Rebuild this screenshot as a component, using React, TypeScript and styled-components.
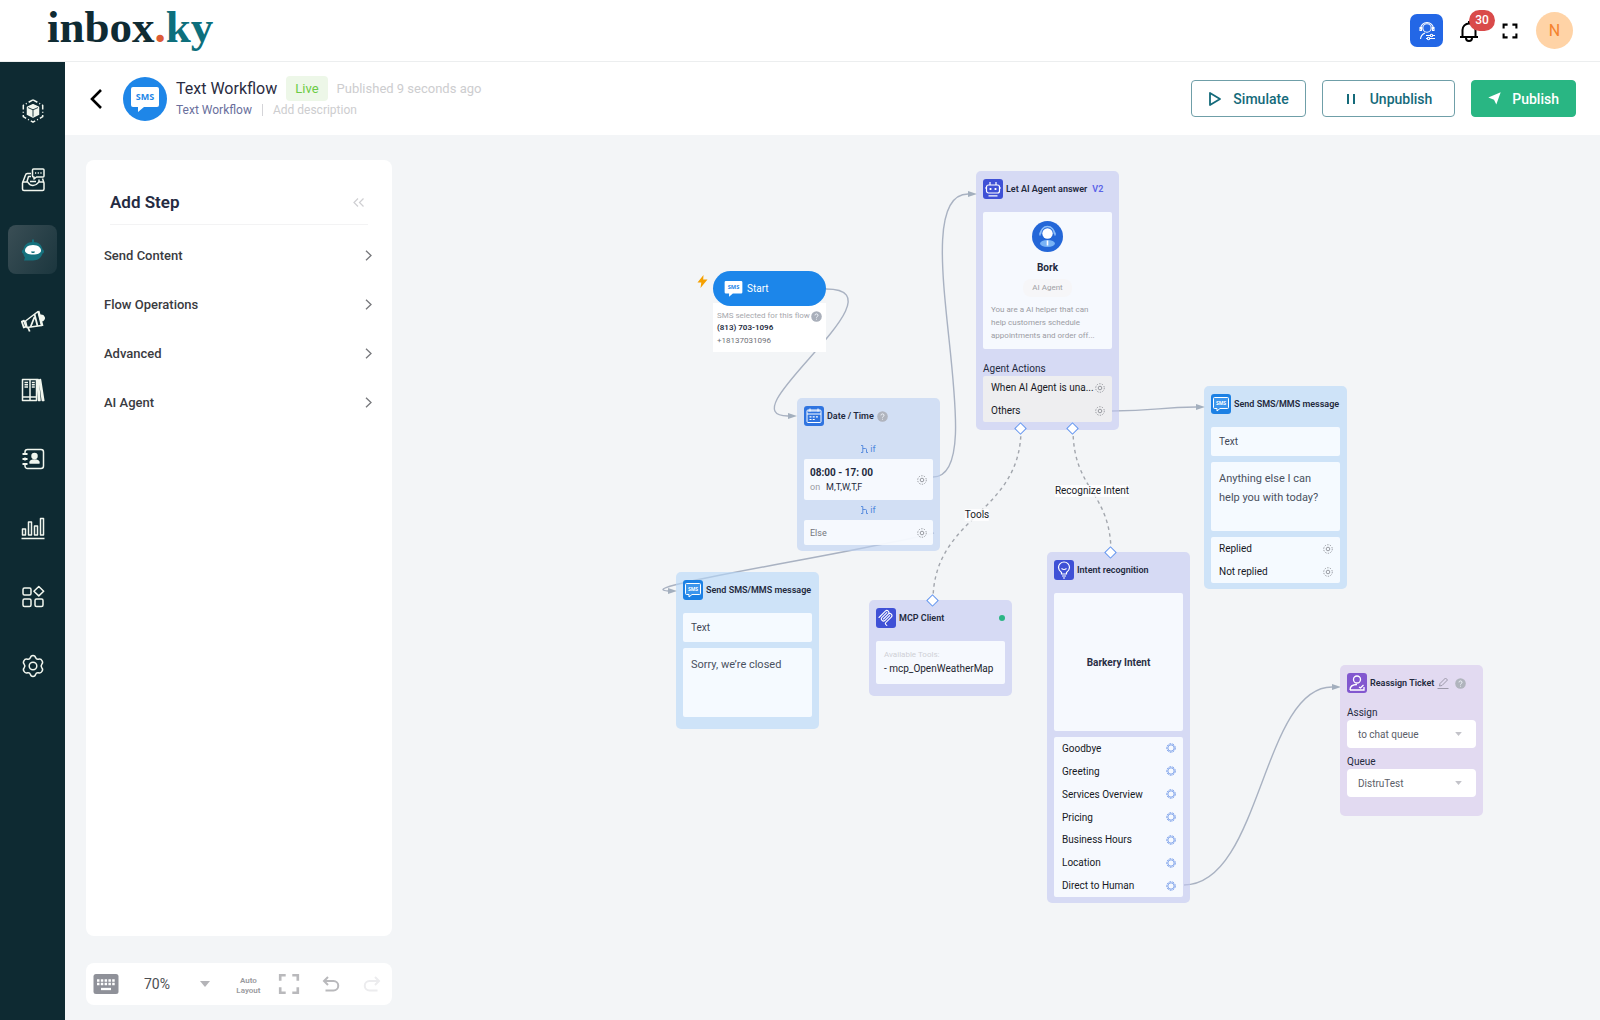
import React from "react";
import styled, { createGlobalStyle } from "styled-components";

const GlobalStyle = createGlobalStyle`
  * { box-sizing: border-box; }
  body {
    margin: 0;
    background: #f3f5f7;
    font-family: Roboto, "Liberation Sans", sans-serif;
    color: #23293d;
  }
  button, select { font-family: inherit; color: inherit; }
  svg { display: block; flex: none; }
`;

/* ---------- shell ---------- */

const Page = styled.div`
  min-height: 100vh;
  display: flex;
  flex-direction: column;
`;

const TopBar = styled.header`
  height: 62px;
  display: flex;
  align-items: center;
  justify-content: space-between;
  padding: 0 27px 0 47px;
  background: #fff;
  border-bottom: 1px solid #eceeef;
`;

const Logo = styled.a`
  font: bold 45px/52px "Liberation Serif", serif;
  color: #0f2b33;
  text-decoration: none;
  padding-bottom: 8px;
`;
const LogoDot = styled.span`color: #dd5b36;`;
const LogoEnd = styled.span`color: #0d6f7c;`;

const TopActions = styled.div`
  display: flex;
  align-items: center;
`;

const PlainButton = styled.button`
  display: flex;
  align-items: center;
  justify-content: center;
  padding: 0;
  border: 0;
  background: none;
  cursor: pointer;
`;

const AgentButton = styled(PlainButton)`
  width: 33px;
  height: 33px;
  border-radius: 7px;
  background: #2367e6;
  margin-right: 14px;
`;

const BellButton = styled(PlainButton)`
  position: relative;
  width: 24px;
  height: 24px;
  color: #000;
  margin-right: 20px;
`;

const Count = styled.span`
  position: absolute;
  left: 12px;
  top: -9px;
  width: 26px;
  height: 21px;
  border-radius: 11px;
  background: #d94a4a;
  color: #fff;
  font-size: 12px;
  font-weight: 500;
  line-height: 21px;
`;

const FullButton = styled(PlainButton)`
  width: 18px;
  height: 24px;
  color: #000;
  margin-right: 17px;
`;

const Avatar = styled(PlainButton)`
  width: 37px;
  height: 37px;
  border-radius: 50%;
  background: #ffd3a6;
  color: #f5822d;
  font-size: 16px;
`;

const Body = styled.div`
  flex: 1;
  display: flex;
`;

const Rail = styled.nav`
  width: 65px;
  background: #0e2a32;
  display: flex;
  flex-direction: column;
  align-items: center;
  padding-top: 24px;
  gap: 20px;
`;

const RailLink = styled.a<{ $active?: boolean }>`
  width: 49px;
  height: 49px;
  margin: ${(p) => (p.$active ? "1px 0 2px" : "0")};
  border-radius: 8px;
  display: flex;
  align-items: center;
  justify-content: center;
  color: #f1f6ee;
  background: ${(p) => (p.$active ? "linear-gradient(120deg, #3a4e55, #1b363e)" : "none")};
`;

const Main = styled.main`
  flex: 1;
  min-width: 0;
  display: flex;
  flex-direction: column;
`;

/* ---------- workflow bar ---------- */

const FlowBar = styled.div`
  height: 73px;
  display: flex;
  align-items: center;
  padding: 0 24px 0 22px;
  background: #fff;
`;

const BackButton = styled(PlainButton)`
  width: 18px;
  height: 24px;
  color: #000;
  margin-right: 18px;
`;

const FlowMark = styled.div`
  width: 44px;
  height: 44px;
  border-radius: 50%;
  background: #1e86e8;
  display: flex;
  align-items: center;
  justify-content: center;
  margin-right: 9px;
`;

const FlowInfo = styled.div`
  flex: 1;
  padding-bottom: 2px;
`;

const FlowLine = styled.div`
  display: flex;
  align-items: center;
`;

const FlowTitle = styled.h1`
  margin: 0;
  font-size: 16px;
  line-height: 25px;
  font-weight: 400;
  color: #2a2c41;
`;

const LiveTag = styled.span`
  margin: 0 9px;
  padding: 0 9px;
  border-radius: 4px;
  background: #edf7e8;
  color: #6bcb45;
  font-size: 13px;
  line-height: 25px;
`;

const Faint = styled.span`
  font-size: 13px;
  color: #cdcdcf;
`;

const Crumb = styled.span<{ $faint?: boolean }>`
  font-size: 12px;
  line-height: 18px;
  color: ${(p) => (p.$faint ? "#cdcdcf" : "#6a6f9c")};
`;

const CrumbBar = styled.span`
  width: 1px;
  height: 12px;
  margin: 0 10px;
  background: #d4d4d8;
`;

const FlowButton = styled.button<{ $solid?: boolean; $wide?: boolean }>`
  height: 37px;
  display: flex;
  align-items: center;
  gap: 11px;
  margin-left: 16px;
  padding: 0 ${(p) => (p.$wide ? 22 : 16)}px;
  border: 1px solid ${(p) => (p.$solid ? "#29b683" : "#6f9fa8")};
  border-radius: 4px;
  background: ${(p) => (p.$solid ? "#29b683" : "#fff")};
  color: ${(p) => (p.$solid ? "#fff" : "#146a7a")};
  font-size: 14px;
  font-weight: 500;
  cursor: pointer;
`;

/* ---------- left column ---------- */

const Workspace = styled.div`
  flex: 1;
  display: flex;
`;

const Tools = styled.div`
  width: 327px;
  display: flex;
  flex-direction: column;
  gap: 27px;
  padding: 25px 0 15px 21px;
`;

const StepPanel = styled.aside`
  flex: 1;
  border-radius: 8px;
  background: #fff;
  padding: 24px 18px;
`;

const StepHead = styled.div`
  display: flex;
  align-items: center;
  justify-content: space-between;
  margin: 0 6px 6px;
  padding: 0 4px 4px 0;
  height: 41px;
  border-bottom: 1px solid #f3f3f4;
`;

const StepTitle = styled.h2`
  margin: 0;
  font-size: 17px;
  line-height: 30px;
  font-weight: 600;
  color: #252b42;
`;

const CollapseButton = styled(PlainButton)`
  color: #cfcfd2;
`;

const StepRow = styled.button`
  width: 100%;
  height: 49px;
  display: flex;
  align-items: center;
  justify-content: space-between;
  padding: 0 2px 0 0;
  border: 0;
  background: none;
  color: #3a3b3f;
  font-size: 13px;
  font-weight: 500;
  cursor: pointer;
`;

const ZoomBar = styled.div`
  height: 42px;
  display: flex;
  align-items: center;
  padding: 0 11px 0 7px;
  border-radius: 8px;
  background: #fff;
  color: #b6b6b9;
`;

const ZoomField = styled.div`
  position: relative;
  display: flex;
  align-items: center;
  width: 68px;
  margin: 0 25px;
`;

const ZoomSelect = styled.select`
  appearance: none;
  width: 100%;
  height: 24px;
  padding: 0;
  border: 0;
  background: none;
  font-size: 14px;
  color: #4c4e52;
`;

const Caret = styled.svg<{ $right: number }>`
  position: absolute;
  right: ${(p) => p.$right}px;
  pointer-events: none;
`;

const AutoButton = styled(PlainButton)`
  width: 28px;
  margin-right: 16px;
  padding-top: 4px;
  color: #9a9a9e;
  font-size: 8px;
  font-weight: 600;
  line-height: 10px;
`;

const BarButton = styled(PlainButton)<{ $gap?: number; $faint?: boolean }>`
  margin-right: ${(p) => p.$gap ?? 0}px;
  color: ${(p) => (p.$faint ? "#ececee" : "#b9b9bc")};
`;

/* ---------- canvas ---------- */

const Canvas = styled.section`
  position: relative;
  flex: 1;
  min-width: 0;
  overflow: hidden;
`;

const Edges = styled.svg`
  position: absolute;
  inset: 0;
  width: 100%;
  height: 100%;
`;

const tones = {
  sky: "rgba(181, 215, 248, 0.6)",
  blue: "rgba(189, 209, 242, 0.6)",
  indigo: "rgba(195, 200, 241, 0.6)",
  purple: "#e2daf1",
};

const Spot = styled.div<{ $x: number; $y: number }>`
  position: absolute;
  left: ${(p) => p.$x}px;
  top: ${(p) => p.$y}px;
`;

const NodeBox = styled(Spot)<{ $tone: keyof typeof tones; $end?: number }>`
  width: 143px;
  padding: 8px 7px ${(p) => p.$end ?? 7}px;
  border-radius: 5px;
  background: ${(p) => tones[p.$tone]};
`;

const NodeHead = styled.div`
  display: flex;
  align-items: center;
  gap: 3px;
  height: 20px;
  margin-bottom: 13px;
`;

const NodeIcon = styled.span<{ $bg: string }>`
  width: 20px;
  height: 20px;
  border-radius: 3px;
  background: ${(p) => p.$bg};
`;

const NodeTitle = styled.h3`
  margin: 0;
  font-size: 9px;
  font-weight: 600;
  line-height: 12px;
  white-space: nowrap;
`;

const Version = styled.span`
  margin-left: 2px;
  font-size: 9px;
  font-weight: 600;
  color: #5a63e8;
`;

const Online = styled.span`
  width: 6px;
  height: 6px;
  border-radius: 50%;
  background: #2bb584;
  margin-left: auto;
`;

const Card = styled.div<{ $h?: number }>`
  min-height: ${(p) => p.$h ?? 0}px;
  border-radius: 2px;
  background: rgba(250, 252, 255, 0.9);
`;

const CardStack = styled.div`
  display: flex;
  flex-direction: column;
  gap: 6px;
`;

const TypeCard = styled(Card)`
  padding: 0 8px;
  font-size: 10px;
  line-height: 29px;
  color: #3f4656;
`;

const MessageCard = styled(Card)`
  padding: 7px 8px;
  font-size: 11px;
  line-height: 19px;
  color: #4a5160;
`;

const GreyCard = styled(Card)`
  background: #eeeef0;
`;

const IntentCard = styled(Card)`
  height: 160px;
  display: flex;
  flex-direction: column;
`;

const Row = styled.div`
  height: 23px;
  display: flex;
  align-items: center;
  justify-content: space-between;
  padding: 0 7px 0 8px;
  font-size: 10px;
  color: #17191f;
  white-space: nowrap;
`;

const AgentCard = styled(Card)`
  height: 137px;
  display: flex;
  flex-direction: column;
  align-items: center;
  padding: 9px 8px 0;
`;

const AgentName = styled.div`
  margin-top: 9px;
  font-size: 10px;
  font-weight: 700;
  line-height: 14px;
`;

const AgentTag = styled.div`
  margin: 4px 0 6px;
  padding: 0 9px;
  border-radius: 8px;
  background: #f6f6f8;
  color: #a0a0a4;
  font-size: 8px;
  line-height: 18px;
`;

const AgentText = styled.p`
  margin: 0;
  align-self: stretch;
  font-size: 8px;
  line-height: 13px;
  color: #9b9ca3;
  white-space: nowrap;
`;

const SectionLabel = styled.div`
  margin-top: 12px;
  font-size: 10px;
  line-height: 15px;
`;

const Branch = styled.div`
  height: 20px;
  display: flex;
  align-items: center;
  justify-content: center;
  gap: 2px;
  color: #4f86dd;
  font-size: 9px;
`;

const SlotCard = styled(Card)`
  display: flex;
  align-items: center;
  justify-content: space-between;
  padding: 0 6px;
`;

const Hours = styled.div`
  font-size: 10px;
  font-weight: 700;
  line-height: 15px;
`;

const Days = styled.div`
  font-size: 9px;
  line-height: 15px;
`;

const Muted = styled.span`
  color: #9a9ca3;
  margin-right: 6px;
`;

const Else = styled.span`
  font-size: 9px;
  color: #74767c;
`;

const CenterCard = styled(Card)`
  display: flex;
  align-items: center;
  justify-content: center;
  font-size: 10px;
  font-weight: 700;
  color: #2a2e45;
`;

const ToolCard = styled(Card)`
  padding: 7px 8px;
  font-size: 10px;
  line-height: 14px;
  color: #23262f;
`;

const ToolHint = styled.div`
  font-size: 8px;
  line-height: 14px;
  color: #cfd0d6;
`;

const TicketHead = styled(NodeHead)`
  margin-bottom: 12px;
`;

const TicketHelp = styled.span`
  margin-left: 3px;
`;

const FieldStack = styled.div`
  display: flex;
  flex-direction: column;
  gap: 6px;
`;

const FieldLabel = styled.label`
  display: block;
  font-size: 10px;
  line-height: 15px;
`;

const FieldWrap = styled.div`
  position: relative;
  display: flex;
  align-items: center;
`;

const FieldSelect = styled.select`
  appearance: none;
  width: 100%;
  height: 28px;
  padding: 0 11px;
  border: 0;
  border-radius: 4px;
  background: #fff;
  font-size: 10px;
  color: #5b5e68;
`;

const StartPill = styled.div`
  position: relative;
  display: flex;
  align-items: center;
  gap: 4px;
  width: 113px;
  height: 35px;
  padding-left: 11px;
  border-radius: 18px;
  background: #1c86ea;
  color: #fff;
  font-size: 10px;
`;

const StartInfo = styled.div`
  margin-top: -3px;
  width: 113px;
  padding: 7px 4px 4px;
  background: #fff;
  font-size: 8px;
  line-height: 14px;
  color: #6f7178;
`;

const StartHint = styled.div`
  display: flex;
  align-items: center;
  justify-content: space-between;
  font-size: 8px;
  line-height: 12px;
  color: #a6a7ac;
  white-space: nowrap;
`;

const StartNumber = styled.div`
  font-size: 8px;
  font-weight: 600;
  line-height: 12px;
  color: #23293d;
`;

const EdgeLabel = styled(Spot)`
  transform: translate(-50%, -50%);
  background: rgba(255, 255, 255, 0.8);
  font-size: 10px;
  line-height: 12px;
  color: #17191f;
  white-space: nowrap;
`;

const Port = styled(Spot)`
  width: 9px;
  height: 9px;
  margin: -5px;
  border: 1px solid #5f92ee;
  background: #fff;
  transform: rotate(45deg);
`;

/* ---------- icons ---------- */

const SmsBubble = ({ size }: { size: number }) => (
  <svg width={size} height={size} viewBox="0 0 30 30">
    <path d="M3 3h24a2 2 0 0 1 2 2v16a2 2 0 0 1-2 2H14l-6 5v-5H3a2 2 0 0 1-2-2V5a2 2 0 0 1 2-2z" fill="#fff" />
    <text x="15" y="16" textAnchor="middle" fontSize="9" fontWeight="700" fontFamily="Open Sans, sans-serif" fill="#1e86e8">SMS</text>
  </svg>
);

const SmsIcon = () => (
  <NodeIcon $bg="#1b80e4">
    <svg width="20" height="20" viewBox="0 0 20 20">
      <path d="M3.500 3.500h13a1 1 0 0 1 1 1v9a1 1 0 0 1-1 1H9l-3 2.500v-2.500H3.500a1 1 0 0 1-1-1v-9a1 1 0 0 1 1-1z" fill="#3c95ec" stroke="#fff" />
      <text x="10" y="11" textAnchor="middle" fontSize="5" fontWeight="700" fontFamily="Open Sans, sans-serif" fill="#fff">SMS</text>
    </svg>
  </NodeIcon>
);

const Help = ({ tone = "#b0b4bd" }: { tone?: string }) => (
  <svg width="11" height="11" viewBox="0 0 11 11">
    <circle cx="5.5" cy="5.5" r="5.300" fill={tone} />
    <path d="M4 4.400a1.500 1.500 0 1 1 2.200 1.300c-.5.300-.7.500-.7 1M5.500 7.800v.8" stroke="#eef2f8" fill="none" />
  </svg>
);

const Gear = ({ blue }: { blue?: boolean }) => (
  <svg width="10" height="10" viewBox="0 0 10 10" fill="none" stroke={blue ? "#6f97e8" : "#8d9096"}>
    <circle cx="5" cy="5" r="4.300" strokeWidth="0.900" strokeDasharray={blue ? "2 1" : "1.400 1.300"} />
    <circle cx="5" cy="5" r={blue ? 3.2 : 1.8} strokeWidth="0.900" />
  </svg>
);

const railIcons: { name: string; active?: boolean; art: React.ReactNode }[] = [
  {
    name: "Products",
    art: (
      <>
        <path d="M12 .8l9.700 5.500v11.400L12 23.200l-9.700-5.500V6.300z" strokeDasharray="5 2.200 1 2.200" />
        <path d="M12 5.800l5.500 2.400v7.200L12 18l-5.500-2.600V8.200z" fill="currentColor" />
        <path d="M7 8.600l5 2.200 5-2.200M12 10.800v6.800" stroke="#0e2a32" strokeWidth=".9" />
      </>
    ),
  },
  {
    name: "Inbox",
    art: (
      <>
        <path d="M10 5.500H6.500a2 2 0 0 0-2 1.500L1.500 15v6a1.500 1.500 0 0 0 1.500 1.500h18.500A1.500 1.500 0 0 0 23 21v-6l-1.500-4.500" />
        <path d="M1.500 14H6.500c1 0 1 3.500 5.500 3.500s5-3.500 6-3.500h5M6 13.500l1.500-5H10M18 13.500v-2M9 13.500h6" />
        <path d="M12.500 1H22a1 1 0 0 1 1 1v6a1 1 0 0 1-1 1h-6.500L13 11V9h-.5a1 1 0 0 1-1-1V2a1 1 0 0 1 1-1z" />
        <path d="M14 5h1.200M16.700 5h1.200M19.400 5h1.200" />
      </>
    ),
  },
  {
    name: "Automation",
    active: true,
    art: (
      <>
        <path d="M12 5V1.500" stroke="#16717d" strokeWidth="2" />
        <path d="M12 4c6 0 9 3.500 9.500 7.500 2 .5 2 3.500 0 4-1 4-4.500 7-9.500 7H3l1-3c-1-1-1.500-2.500-1.700-4-2-.5-1.800-3.500.2-4C3 7.500 6 4 12 4z" fill="#16717d" stroke="none" />
        <path d="M12 7c5.500 0 8 3 8 5.500S17 16.500 12 16.500 4 15 4 12.500 6.500 7 12 7z" fill="#fff" stroke="none" />
        <path d="M10.500 14q1.500 1.300 3 0z" stroke="#16717d" strokeWidth="1" fill="#16717d" />
      </>
    ),
  },
  {
    name: "Campaigns",
    art: (
      <>
        <path d="M4.500 12L17 2.500l3.500 14-14.500 2z" />
        <path d="M.8 12.500l2.200-.8 2 6-2.200.8zM7 18.500l1.700 4M13.500 5l3 12M9.500 18l4-10" strokeWidth="1.800" />
        <path d="M17.500 2l4 15M20 6.500c3 0 4 3 1.800 4.800z" fill="currentColor" strokeWidth="2" />
      </>
    ),
  },
  {
    name: "Library",
    art: (
      <>
        <path d="M1.500 1.500h7.500v21H1.500zM9 1.500h6.500v21H9zM1.500 19h14M3.500 4.500H7M3.500 6.800H7M3.500 9.100H7M10.800 4.500h3M10.800 6.800h3M10.800 9.100h3" />
        <path d="M16 1.500h1.200l1.800 21h-1.500zM19.500 1.500l3.300 21h-1.500L18.500 2z" />
      </>
    ),
  },
  {
    name: "Contacts",
    art: (
      <>
        <path d="M4 7V5a2.500 2.500 0 0 1 2.500-2.500H20A2.500 2.500 0 0 1 22.500 5v14a2.500 2.500 0 0 1-2.500 2.500H6.500A2.500 2.500 0 0 1 4 19v-2M4 10.500v3" />
        <path d="M1.500 7h5M1.500 12h5M1.500 17h5" strokeWidth="2" />
        <circle cx="13.500" cy="9" r="2.500" fill="currentColor" />
        <path d="M9 16c0-4 9-4 9 0z" fill="currentColor" />
      </>
    ),
  },
  {
    name: "Reports",
    art: <path d="M.5 22.500h23M1.500 13h3v6h-3zM7.500 6h3v13h-3zM13.500 10h3v9h-3zM19.500 2.500h3V19h-3z" />,
  },
  {
    name: "Apps",
    art: (
      <>
        <rect x="2" y="3" width="8" height="7" rx="1.500" />
        <rect x="2" y="14" width="8" height="7.500" rx="1.500" />
        <rect x="14" y="14" width="8" height="7.500" rx="1.500" />
        <path d="M17.800 1.500l4.900 4.700-4.900 4.700-4.900-4.700z" />
      </>
    ),
  },
  {
    name: "Settings",
    art: (
      <>
        <path d="M9.300 3.800Q9.800 1.500 12 1.500T14.700 3.800Q15.300 5.500 17.300 5.200 20 4.500 21 6.700 22.300 8.800 20.800 10.300 19.500 12 20.800 13.700 22.300 15.200 21 17.300 20 19.500 17.300 18.800 15.300 18.500 14.700 20.200 14.200 22.500 12 22.500T9.300 20.200Q8.700 18.500 6.700 18.800 4 19.500 3 17.300 1.700 15.200 3.200 13.700 4.500 12 3.200 10.300 1.700 8.800 3 6.700 4 4.500 6.700 5.200 8.700 5.500 9.300 3.800z" />
        <circle cx="12" cy="12" r="3.800" />
      </>
    ),
  },
];

const Corners = ({ size, weight }: { size: number; weight: number }) => (
  <svg width={size} height={size} viewBox="0 0 20 20" fill="none" stroke="currentColor" strokeWidth={weight}>
    <path d="M2 7V2h5M13 2h5v5M18 13v5h-5M7 18H2v-5" />
  </svg>
);

const BranchMark = () => (
  <svg width="7" height="8" viewBox="0 0 7 8" fill="none" stroke="currentColor" strokeWidth=".9">
    <path d="M0 .5h1.800v7H0M1.800 3.500h2.700a1 1 0 0 1 1 1v3H7" />
  </svg>
);

/* ---------- node parts ---------- */

const OptionRow = ({ text, blue }: { text: string; blue?: boolean }) => (
  <Row>
    {text}
    <Gear blue={blue} />
  </Row>
);

const MessageNode = ({ x, y, text, options, end }: { x: number; y: number; text: string; options?: string[]; end: number }) => (
  <NodeBox $x={x} $y={y} $tone="sky" $end={end}>
    <NodeHead>
      <SmsIcon />
      <NodeTitle>Send SMS/MMS message</NodeTitle>
    </NodeHead>
    <CardStack>
      <TypeCard>Text</TypeCard>
      <MessageCard $h={69}>{text}</MessageCard>
      {options && <Card>{options.map((o) => <OptionRow key={o} text={o} />)}</Card>}
    </CardStack>
  </NodeBox>
);

const TicketField = ({ id, label, value }: { id: string; label: string; value: string }) => (
  <div>
    <FieldLabel htmlFor={id}>{label}</FieldLabel>
    <FieldWrap>
      <FieldSelect id={id}><option>{value}</option></FieldSelect>
      <Caret $right={14} width="7" height="4" viewBox="0 0 10 6"><path d="M0 0h10L5 6z" fill="#c3c3c9" /></Caret>
    </FieldWrap>
  </div>
);

const steps = ["Send Content", "Flow Operations", "Advanced", "AI Agent"];
const intents = ["Goodbye", "Greeting", "Services Overview", "Pricing", "Business Hours", "Location", "Direct to Human"];
const solidEdges = [
  "M434 154C518 154 332 281 396 281",
  "M541 342C604 342 508 59 576 59",
  "M720 276C766 276 766 272 804 272",
  "M542 398C468 417 234 453 276 456",
  "M792 750C869 750 870 552 940 552",
];
const dashedEdges = ["M629 294C629 380 541 380 541 466", "M681 294C681 356 719 356 719 418"];
const ports = [[629, 294], [681, 294], [541, 466], [719, 418]];

export default function App() {
  return (
    <Page>
      <GlobalStyle />
      <TopBar>
        <Logo href="#">inbox<LogoDot>.</LogoDot><LogoEnd>ky</LogoEnd></Logo>
        <TopActions>
          <AgentButton aria-label="Agent settings">
            <svg width="20" height="20" viewBox="0 0 20 20" fill="none" stroke="#fff" strokeWidth="1.100">
              <circle cx="10" cy="7" r="4.200" />
              <path d="M3.500 8a6.500 6.500 0 0 1 13 0M3 6.500v3h1.500v-3zM15.500 6.500v3H17v-3zM3.500 18c.3-3 2-5 4.500-6M9 14.500h9M9 17.500h9" />
              <circle cx="14.500" cy="14.500" r="1.200" fill="#2367e6" />
              <circle cx="11.500" cy="17.500" r="1.200" fill="#2367e6" />
            </svg>
          </AgentButton>
          <BellButton aria-label="Notifications">
            <svg width="22" height="24" viewBox="0 0 22 24" fill="none" stroke="currentColor" strokeWidth="2">
              <path d="M2 18h18M4.500 18v-7a6.500 6.500 0 0 1 13 0v7M8 19a3 3 0 0 0 6 0M11 2v2" />
            </svg>
            <Count>30</Count>
          </BellButton>
          <FullButton aria-label="Full screen"><Corners size={16} weight={2.6} /></FullButton>
          <Avatar aria-label="Account">N</Avatar>
        </TopActions>
      </TopBar>
      <Body>
        <Rail>
          {railIcons.map((item) => (
            <RailLink key={item.name} href="#" aria-label={item.name} $active={item.active}>
              <svg width="24" height="24" viewBox="0 0 24 24" fill="none" stroke="currentColor" strokeWidth="1.500" strokeLinejoin="round">
                {item.art}
              </svg>
            </RailLink>
          ))}
        </Rail>
        <Main>
          <FlowBar>
            <BackButton aria-label="Back">
              <svg width="14" height="22" viewBox="0 0 14 22" fill="none" stroke="currentColor" strokeWidth="2.600">
                <path d="M12 2L3 11l9 9" />
              </svg>
            </BackButton>
            <FlowMark><SmsBubble size={30} /></FlowMark>
            <FlowInfo>
              <FlowLine>
                <FlowTitle>Text Workflow</FlowTitle>
                <LiveTag>Live</LiveTag>
                <Faint>Published 9 seconds ago</Faint>
              </FlowLine>
              <FlowLine>
                <Crumb>Text Workflow</Crumb>
                <CrumbBar />
                <Crumb $faint>Add description</Crumb>
              </FlowLine>
            </FlowInfo>
            <FlowButton>
              <svg width="14" height="16" viewBox="0 0 14 16" fill="none" stroke="currentColor" strokeWidth="1.800" strokeLinejoin="round">
                <path d="M2 2l10 6-10 6z" />
              </svg>
              Simulate
            </FlowButton>
            <FlowButton $wide>
              <svg width="14" height="16" viewBox="0 0 14 16" stroke="currentColor" strokeWidth="2">
                <path d="M3 3v10M9 3v10" />
              </svg>
              Unpublish
            </FlowButton>
            <FlowButton $solid>
              <svg width="13" height="13" viewBox="0 0 13 13" fill="currentColor">
                <path d="M12.700.3L8.300 12.500 6 7.800.300 5.500z" />
              </svg>
              Publish
            </FlowButton>
          </FlowBar>
          <Workspace>
            <Tools>
              <StepPanel>
                <StepHead>
                  <StepTitle>Add Step</StepTitle>
                  <CollapseButton aria-label="Collapse">
                    <svg width="11" height="9" viewBox="0 0 11 9" fill="none" stroke="currentColor" strokeWidth="1.200">
                      <path d="M5 .5l-4 4 4 4M10.500.5l-4 4 4 4" />
                    </svg>
                  </CollapseButton>
                </StepHead>
                {steps.map((s) => (
                  <StepRow key={s}>
                    {s}
                    <svg width="7" height="11" viewBox="0 0 7 11" fill="none" stroke="#77787c" strokeWidth="1.300">
                      <path d="M1 .7l5 4.800-5 4.800" />
                    </svg>
                  </StepRow>
                ))}
              </StepPanel>
              <ZoomBar>
                <BarButton aria-label="Keyboard shortcuts">
                  <svg width="26" height="20" viewBox="0 0 26 20">
                    <rect x=".5" width="25" height="20" rx="2.500" fill="#8f9199" />
                    <path d="M4 6.500h18M4 10h18" stroke="#fff" strokeWidth="2.300" strokeDasharray="2.500 1.300" />
                    <path d="M8 15h10" stroke="#fff" strokeWidth="2.300" />
                  </svg>
                </BarButton>
                <ZoomField>
                  <ZoomSelect aria-label="Zoom level"><option>70%</option></ZoomSelect>
                  <Caret $right={0} width="10" height="6" viewBox="0 0 10 6"><path d="M0 0h10L5 6z" fill="#b4b4b8" /></Caret>
                </ZoomField>
                <AutoButton>Auto Layout</AutoButton>
                <BarButton aria-label="Fit view" $gap={22}><Corners size={22} weight={2.4} /></BarButton>
                <BarButton aria-label="Undo" $gap={23}>
                  <svg width="18" height="17" viewBox="0 0 18 17" fill="none" stroke="currentColor" strokeWidth="2">
                    <path d="M6 1L2 5l4 4M2 5h9.500a4.700 4.700 0 0 1 0 9.500H3.500" />
                  </svg>
                </BarButton>
                <BarButton aria-label="Redo" $faint>
                  <svg width="18" height="17" viewBox="0 0 18 17" fill="none" stroke="currentColor" strokeWidth="2">
                    <path d="M12 1l4 4-4 4M16 5H6.500a4.700 4.700 0 0 0 0 9.500h8" />
                  </svg>
                </BarButton>
              </ZoomBar>
            </Tools>
            <Canvas>
              <Edges>
                <defs>
                  <marker id="tip" markerWidth="9" markerHeight="8" refX="0" refY="4" orient="0" markerUnits="userSpaceOnUse">
                    <path d="M0 1l9 3-9 3z" fill="#a3afbe" />
                  </marker>
                </defs>
                {solidEdges.map((d) => (
                  <path key={d} d={d} fill="none" stroke="#a9b2c2" strokeWidth="1.400" markerEnd="url(#tip)" />
                ))}
                {dashedEdges.map((d) => (
                  <path key={d} d={d} fill="none" stroke="#a2a6ad" strokeWidth="1.400" strokeDasharray="3.500 3.500" />
                ))}
              </Edges>

              <Spot $x={305} $y={140}>
                <svg width="11" height="13" viewBox="0 0 11 13"><path d="M6.500 0L.5 7.500h3.800L3.500 13l7-8.500H6.200z" fill="#f5a000" /></svg>
              </Spot>
              <Spot $x={321} $y={136}>
                <StartPill><SmsBubble size={19} />Start</StartPill>
                <StartInfo>
                  <StartHint>SMS selected for this flow<Help tone="#a9afba" /></StartHint>
                  <StartNumber>(813) 703-1096</StartNumber>
                  +18137031096
                </StartInfo>
              </Spot>

              <NodeBox $x={405} $y={263} $tone="blue" $end={6}>
                <NodeHead>
                  <NodeIcon $bg="#2f74e0">
                    <svg width="20" height="20" viewBox="0 0 20 20" fill="none" stroke="#fff">
                      <rect x="3" y="4" width="14" height="12.500" rx="1" />
                      <path d="M3 8h14M6 2.500v3M14 2.500v3M4 5h12" />
                      <path d="M5.500 10.800h9M5.500 13.500h6" strokeDasharray="2 1.200" strokeWidth="1.200" />
                    </svg>
                  </NodeIcon>
                  <NodeTitle>Date / Time</NodeTitle>
                  <Help />
                </NodeHead>
                <Branch><BranchMark />if</Branch>
                <SlotCard $h={41}>
                  <div>
                    <Hours>08:00 - 17: 00</Hours>
                    <Days><Muted>on</Muted>M,T,W,T,F</Days>
                  </div>
                  <Gear />
                </SlotCard>
                <Branch><BranchMark />if</Branch>
                <SlotCard $h={25}><Else>Else</Else><Gear /></SlotCard>
              </NodeBox>

              <NodeBox $x={584} $y={36} $tone="indigo" $end={8}>
                <NodeHead>
                  <NodeIcon $bg="#3f51d6">
                    <svg width="20" height="20" viewBox="0 0 20 20" fill="none" stroke="#fff" strokeWidth="1.200">
                      <rect x="3.500" y="6" width="13" height="8" rx="2" />
                      <path d="M7 3v3M13 3v3M3.500 9H2M18 9h-1.500M5.500 16.800h9" />
                      <path d="M7.500 9v2M12.500 9v2" strokeWidth="1.800" />
                    </svg>
                  </NodeIcon>
                  <NodeTitle>Let AI Agent answer</NodeTitle>
                  <Version>V2</Version>
                </NodeHead>
                <AgentCard>
                  <svg width="31" height="31" viewBox="0 0 31 31">
                    <circle cx="15.500" cy="15.500" r="15.500" fill="#2467d8" />
                    <ellipse cx="15.500" cy="22.500" rx="7.500" ry="3.500" fill="#79b3f5" />
                    <path d="M8.500 13a7 7.500 0 0 1 14 0M8 11.500v3M23 11.500v3" fill="none" stroke="#8fc0fa" strokeWidth="1.500" />
                    <circle cx="15.500" cy="12.500" r="5.200" fill="#fff" />
                    <path d="M15.500 19.500v5" stroke="#fff" strokeWidth="1.600" />
                  </svg>
                  <AgentName>Bork</AgentName>
                  <AgentTag>AI Agent</AgentTag>
                  <AgentText>You are a AI helper that can<br />help customers schedule<br />appointments and order off...</AgentText>
                </AgentCard>
                <SectionLabel>Agent Actions</SectionLabel>
                <GreyCard>
                  <OptionRow text="When AI Agent is una..." />
                  <OptionRow text="Others" />
                </GreyCard>
              </NodeBox>

              <MessageNode x={812} y={251} end={6} text="Anything else I can help you with today?" options={["Replied", "Not replied"]} />
              <MessageNode x={284} y={437} end={12} text="Sorry, we’re closed" />

              <NodeBox $x={477} $y={465} $tone="indigo" $end={12}>
                <NodeHead>
                  <NodeIcon $bg="#3f51d6">
                    <svg width="20" height="20" viewBox="0 0 20 20" fill="none" stroke="#fff" strokeWidth="1.100" strokeLinecap="round">
                      <path d="M3 9.500l6.300-6.300a2 2 0 0 1 3 3L7.500 11M7.700 10.800l4.600-4.600a2 2 0 0 1 3 3l-5.600 5.500q-.8.800 0 1.600l1.100 1.200M10.800 4.700L6 9.400a2 2 0 0 0 3 3l4.700-4.700" />
                    </svg>
                  </NodeIcon>
                  <NodeTitle>MCP Client</NodeTitle>
                  <Online />
                </NodeHead>
                <ToolCard $h={43}>
                  <ToolHint>Available Tools:</ToolHint>
                  - mcp_OpenWeatherMap
                </ToolCard>
              </NodeBox>

              <NodeBox $x={655} $y={417} $tone="indigo" $end={6}>
                <NodeHead>
                  <NodeIcon $bg="#3f51d6">
                    <svg width="20" height="20" viewBox="0 0 20 20" fill="none" stroke="#fff" strokeWidth="1.200">
                      <path d="M7.500 14v-1.500C5.500 11 4.500 9.500 4.500 7.500a5.500 5.500 0 0 1 11 0c0 2-1 3.500-3 5V14zM8 16h4M9 18h2M7.500 8.500q2.500 2 5 0" />
                    </svg>
                  </NodeIcon>
                  <NodeTitle>Intent recognition</NodeTitle>
                </NodeHead>
                <CardStack>
                  <CenterCard $h={138}>Barkery Intent</CenterCard>
                  <IntentCard>{intents.map((t) => <OptionRow key={t} text={t} blue />)}</IntentCard>
                </CardStack>
              </NodeBox>

              <NodeBox $x={948} $y={530} $tone="purple" $end={19}>
                <TicketHead>
                  <NodeIcon $bg="#8257cf">
                    <svg width="20" height="20" viewBox="0 0 20 20" fill="none" stroke="#fff" strokeWidth="1.300">
                      <circle cx="10" cy="6.500" r="3.500" />
                      <path d="M3 17c0-4 3-5.500 7-5.500M3 17h14v-3M12 14l1.500 1 3-3" />
                    </svg>
                  </NodeIcon>
                  <NodeTitle>Reassign Ticket</NodeTitle>
                  <svg width="12" height="12" viewBox="0 0 12 12" fill="none" stroke="#9d99aa">
                    <path d="M.5 11.500h11M2.500 9l.5-2.500L8.500 1l2 2L5 8.500z" />
                  </svg>
                  <TicketHelp><Help /></TicketHelp>
                </TicketHead>
                <FieldStack>
                  <TicketField id="assign" label="Assign" value="to chat queue" />
                  <TicketField id="queue" label="Queue" value="DistruTest" />
                </FieldStack>
              </NodeBox>

              {ports.map(([x, y]) => <Port key={`${x}-${y}`} $x={x} $y={y} />)}
              <EdgeLabel $x={585} $y={380}>Tools</EdgeLabel>
              <EdgeLabel $x={700} $y={356}>Recognize Intent</EdgeLabel>
            </Canvas>
          </Workspace>
        </Main>
      </Body>
    </Page>
  );
}
